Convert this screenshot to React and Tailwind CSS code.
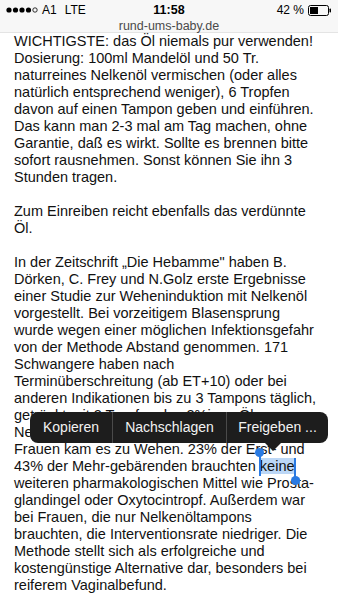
import React from 'react'

const para1 = [
  'WICHTIGSTE: das Öl niemals pur verwenden!',
  'Dosierung: 100ml Mandelöl und 50 Tr.',
  'naturreines Nelkenöl vermischen (oder alles',
  'natürlich entsprechend weniger), 6 Tropfen',
  'davon auf einen Tampon geben und einführen.',
  'Das kann man 2-3 mal am Tag machen, ohne',
  'Garantie, daß es wirkt. Sollte es brennen bitte',
  'sofort rausnehmen. Sonst können Sie ihn 3',
  'Stunden tragen.',
]

const para2 = ['Zum Einreiben reicht ebenfalls das verdünnte', 'Öl.']

const para3a = [
  'In der Zeitschrift „Die Hebamme" haben B.',
  'Dörken, C. Frey und N.Golz erste Ergebnisse',
  'einer Studie zur Weheninduktion mit Nelkenöl',
  'vorgestellt. Bei vorzeitigem Blasensprung',
  'wurde wegen einer möglichen Infektionsgefahr',
  'von der Methode Abstand genommen. 171',
  'Schwangere haben nach',
  'Terminüberschreitung (ab ET+10) oder bei',
  'anderen Indikationen bis zu 3 Tampons täglich,',
  'getränkt mit 2 Tropfen des 2%igen Öls',
  'Nelkenöl, eingeführt. Bei 85% der',
  'Frauen kam es zu Wehen. 23% der Erst- und',
]

const para3b = [
  'weiteren pharmakologischen Mittel wie Prosta-',
  'glandingel oder Oxytocintropf. Außerdem war',
  'bei Frauen, die nur Nelkenöltampons',
  'brauchten, die Interventionsrate niedriger. Die',
  'Methode stellt sich als erfolgreiche und',
  'kostengünstige Alternative dar, besonders bei',
  'reiferem Vaginalbefund.',
]

function Line({ children }) {
  return <div className="whitespace-nowrap h-[17px]">{children}</div>
}

function StatusBar() {
  return (
    <div className="bg-[#f7f7f7] h-[33px] border-b border-[#e4e4e4]">
      <div className="flex items-center justify-between h-[20px] px-[6px] text-[12px] text-black">
        <div className="flex items-center gap-[3px] w-[100px]">
          <svg width="33" height="6" viewBox="0 0 33 6">
            {[0, 1, 2, 3].map((i) => (
              <circle key={i} cx={3 + i * 6.5} cy="3" r="2.6" fill="#000" />
            ))}
            <circle cx={3 + 4 * 6.5} cy="3" r="2.2" fill="none" stroke="#000" strokeWidth="0.8" />
          </svg>
          <span>A1</span>
          <span className="ml-[5px]">LTE</span>
        </div>
        <div className="font-bold text-[12.5px]">11:58</div>
        <div className="flex items-center justify-end gap-[4px] w-[100px]">
          <span>42 %</span>
          <svg width="24" height="11" viewBox="0 0 24 11">
            <rect x="0.5" y="0.5" width="20" height="10" rx="2" fill="none" stroke="#000" strokeWidth="1" />
            <rect x="2" y="2" width="8" height="7" fill="#000" />
            <rect x="21.5" y="3.5" width="1.5" height="4" rx="0.7" fill="#000" />
          </svg>
        </div>
      </div>
      <div className="text-center text-[12.5px] leading-[12px] text-[#4a4a4a]">rund-ums-baby.de</div>
    </div>
  )
}

export default function App() {
  return (
    <div
      className="relative w-[338px] h-[600px] overflow-hidden bg-white"
      style={{ fontFamily: '"Liberation Sans", Arial, sans-serif' }}
    >
      <StatusBar />
      <div className="px-[14px] text-[14.5px] leading-[17px] text-[#111]">
        <div className="mb-[17px]">
          {para1.map((l, i) => <Line key={i}>{l}</Line>)}
        </div>
        <div className="mb-[17px]">
          {para2.map((l, i) => <Line key={i}>{l}</Line>)}
        </div>
        <div>
          {para3a.map((l, i) => <Line key={i}>{l}</Line>)}
          <Line>
            43% der Mehr-gebärenden brauchten{' '}
            <span className="relative bg-[#bcd7f6]">
              keine
              <span className="absolute left-[-1px] top-[-6px] w-[2px] h-[24px] bg-[#2a7ae2]" />
              <span className="absolute left-[-5px] top-[-10px] w-[9px] h-[9px] rounded-full bg-[#2a7ae2]" />
              <span className="absolute right-[-1px] top-0 w-[2px] h-[22px] bg-[#2a7ae2]" />
              <span className="absolute right-[-5px] top-[18px] w-[9px] h-[9px] rounded-full bg-[#2a7ae2]" />
            </span>
          </Line>
          {para3b.map((l, i) => <Line key={i}>{l}</Line>)}
        </div>
      </div>

      {/* copy menu */}
      <div className="absolute left-[30px] top-[412px] w-[298px] h-[31px] rounded-[8px] bg-[#1d1d1d] flex items-center text-[14px] text-[#f2f2f2]">
        <div className="w-[83px] h-full flex items-center justify-center border-r border-[#4a4a4a]">Kopieren</div>
        <div className="w-[114px] h-full flex items-center justify-center border-r border-[#4a4a4a]">Nachschlagen</div>
        <div className="flex-1 h-full flex items-center justify-center">Freigeben ...</div>
        <div className="absolute left-[235px] top-[31px] w-0 h-0 border-l-[8px] border-r-[8px] border-t-[8px] border-l-transparent border-r-transparent border-t-[#1d1d1d]" />
      </div>
    </div>
  )
}
